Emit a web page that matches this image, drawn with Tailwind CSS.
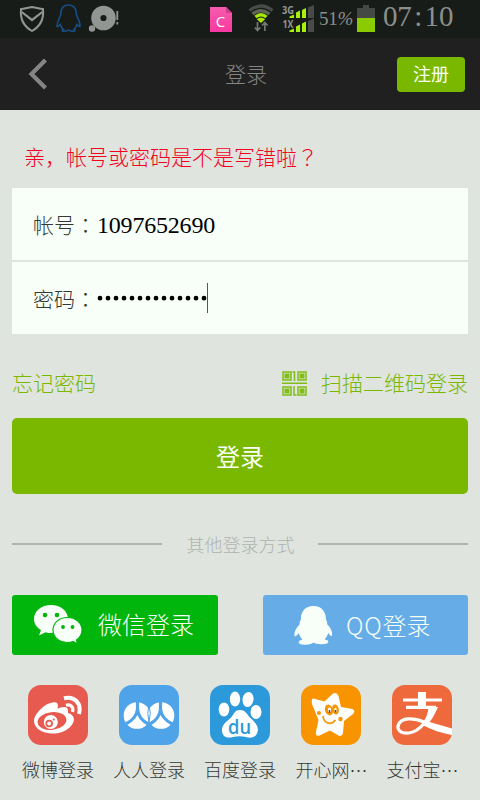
<!DOCTYPE html>
<html lang="zh-CN">
<head>
<meta charset="utf-8">
<meta name="viewport" content="width=device-width, initial-scale=1">
<title>登录</title>
<script src="https://cdn.jsdelivr.net/npm/@tailwindcss/browser@4"></script>
</head>
<body class="w-[480px] h-[800px] overflow-hidden flex flex-col bg-[#dfe4df] font-['Liberation_Serif','Noto_Sans_CJK_SC',sans-serif] font-light text-[21px] leading-none">

<!-- status bar -->
<div class="h-[38px] shrink-0 bg-[#181c18] flex items-start text-[#8c908c]">
  <svg class="shrink-0" width="208" height="38" viewBox="0 0 208 38" fill="none">
    <path d="M32 7C28 8 24 8.500 21 9C20 19 23 26 32 31C41 26 44 19 43 9C40 8.500 36 8 32 7Z" stroke="#929692" stroke-width="2"/>
    <path d="M22 11L32 18.500L42 11L42 13.500L32 21.500L22 13.500Z" fill="#929692"/>
    <path d="M68.500 5C63 5 60.500 9 60.700 15C59 19 57 22 57 26.500C58.500 27 59.500 25.500 60.300 24.500C61 27 62 28.500 63.300 29.500C61.500 30 61.500 31.400 64 31.400C66 31.400 67.500 31 68.500 30C69.500 31 71 31.400 73.500 31.400C75.500 31.400 75.500 30 74 29.500C75.500 28 76.500 26.500 77 24.500C78 25.500 79 27 80 26.500C80.500 22 78 19 76.500 15C76.500 9 74 5 68.500 5Z" stroke="#184e84" stroke-width="1.600"/>
    <circle cx="103.500" cy="18" r="7.700" stroke="#929692" stroke-width="9.200"/>
    <circle cx="92" cy="28.500" r="3.200" fill="#929692"/>
    <path d="M117.300 11V20M117.300 22V24.500" stroke="#929692" stroke-width="1.800"/>
  </svg>
  <svg class="shrink-0" width="108" height="38" viewBox="208 0 108 38" fill="none">
    <defs><linearGradient id="p" x1="0" y1="0" x2="0" y2="1"><stop offset="0" stop-color="#f45cae"/><stop offset="1" stop-color="#fa38a0"/></linearGradient></defs>
    <path d="M210 7H226L232 13V32H210Z" fill="url(#p)"/>
    <path d="M226 7L232 13H226Z" fill="#d23c8c"/>
    <text x="220.500" y="27" text-anchor="middle" font-family="Open Sans" font-weight="400" font-size="15" fill="#fff">C</text>
    <g stroke-width="3.200">
      <path d="M249.500 10.500Q261 1.500 272.500 10.500" stroke="#484b48"/>
      <path d="M252.500 14Q261 7.500 269.500 14" stroke="#5d6659"/>
      <path d="M255.500 17Q261 12.500 266.500 17" stroke="#a6e60a"/>
    </g>
    <path d="M256.800 19.200Q261 16 265.200 19.200L261 23Z" fill="#a6e60a"/>
    <path d="M257.500 22V31M254.800 27.500L257.500 30.500L260.200 27.500M264.800 31V22M262 25.500L264.800 22.500L267.600 25.500" stroke="#747874" stroke-width="1.700"/>
    <path d="M289.500 18V16.500L294 14.500V18ZM296 18V12.500L300 10.500V18ZM302 18V10L306 8V18ZM289.500 32V30.500L294 28.500V32ZM296 32V26.500L300 24.500V32ZM302 32V23.500L306 21.500V32Z" fill="#a6f00a"/>
    <path d="M308 18V7.500L314 5V18ZM308 32V21L314 18.500V32Z" fill="#484b48"/>
    <text x="282" y="14" font-family="Open Sans" font-weight="700" font-size="10.500" textLength="12" lengthAdjust="spacingAndGlyphs" fill="#929692" stroke="#181c18" stroke-width="1.500" paint-order="stroke">3G</text>
    <text x="282.500" y="27.500" font-family="Open Sans" font-weight="700" font-size="10.500" textLength="11" lengthAdjust="spacingAndGlyphs" fill="#929692" stroke="#181c18" stroke-width="1.500" paint-order="stroke">1X</text>
  </svg>
  <span class="w-[41px] shrink-0 pl-[3px] pt-[9px] text-[19px] tracking-[-0.300px] whitespace-nowrap">51<span class="inline-block w-[15px] origin-left italic">%</span></span>
  <svg class="shrink-0" width="18" height="38" viewBox="0 0 18 38"><path d="M0 8H6V5H12V8H18V18H0Z" fill="#454845"/><path d="M0 18H18V32H0Z" fill="#8acc00"/></svg>
  <span class="pl-[8px] pt-[2px] text-[29px] tracking-[-0.200px] whitespace-nowrap">07<span class="inline-block w-[13px] text-center">:</span>10</span>
</div>

<!-- title bar -->
<header class="h-[72px] shrink-0 bg-[#202020] grid grid-cols-[120px_1fr_120px] items-center pr-[15px] pl-[27px]">
  <svg width="22" height="34" viewBox="0 0 22 34" fill="none"><path d="M18.500 3L4.500 17L18.500 31" stroke="#858585" stroke-width="4.200"/></svg>
  <h1 class="text-[#858585] text-center pt-[3px]">登录</h1>
  <button class="justify-self-end w-[68px] h-[35px] rounded-[4px] bg-[#7ab800] text-[#f8fff8] text-[18px] font-normal pt-[1px]">注册</button>
</header>

<main class="px-3 flex flex-col">
  <p class="h-[78px] pt-[36px] pl-[12px] text-[#f4001c] whitespace-nowrap">亲，帐号或密码是不是写错啦<span class="font-['Noto_Sans_CJK_TC']" lang="zh-TW">？</span></p>

  <div class="flex flex-col gap-[2px]">
    <div class="h-[72px] bg-[#f8fff8] flex items-center pl-[21px] pt-[2px]">
      <span class="w-[64px] text-[#333833] whitespace-nowrap">帐号<span class="font-['Noto_Sans_CJK_TC']" lang="zh-TW">：</span></span>
      <span class="text-[24px] tracking-[-0.200px] text-black">1097652690</span>
    </div>
    <div class="h-[72px] bg-[#f8fff8] flex items-center pl-[21px]">
      <span class="w-[64px] text-[#333833] whitespace-nowrap pt-[2px]">密码<span class="font-['Noto_Sans_CJK_TC']" lang="zh-TW">：</span></span>
      <svg width="112" height="30" viewBox="0 0 112 30"><path d="M3 15.200H108" stroke="#000" stroke-width="4.800" stroke-linecap="round" stroke-dasharray="0 8"/><path d="M110.500 0V30" stroke="#555" stroke-width="1"/></svg>
    </div>
  </div>

  <div class="h-[84px] flex items-center justify-between text-[#7ab800] pt-[14px]">
    <span class="pt-[2px]">忘记密码</span>
    <span class="flex items-center gap-[14px]">
      <svg width="25" height="25" viewBox="0 0 25 25" fill="none" stroke="#7fbd16" stroke-width="1.500">
        <path d="M1 1H9V9H1ZM16 1H24V9H16ZM1 16H9V24H1ZM16 16H24V24H16Z"/>
        <path d="M2.500 2.500H7.500V7.500H2.500ZM17.500 2.500H22.500V7.500H17.500ZM2.500 17.500H7.500V22.500H2.500ZM17.500 17.500H22.500V22.500H17.500Z" fill="#7fbd16" stroke="none"/>
        <path d="M10.500 1H12.500V10M0 12.300H25M12 15V24H14.500"/>
      </svg>
      <span class="pt-[2px]">扫描二维码登录</span>
    </span>
  </div>

  <button class="h-[76px] rounded-[5px] bg-[#7ab800] text-[#f8fff8] text-[24px] font-normal pt-[3px]">登录</button>

  <div class="h-[101px] flex items-center justify-between">
    <span class="w-[150px] h-[2px] bg-[#b0b5b0] relative -top-px"></span>
    <span class="text-[18px] text-[#afb4af] pt-[2px] pl-[1px]">其他登录方式</span>
    <span class="w-[150px] h-[2px] bg-[#b0b5b0] relative -top-px"></span>
  </div>

  <div class="flex justify-between text-[24px] text-[#f8fff8]">
    <button class="w-[206px] h-[60px] rounded-[3px] bg-[#00b60c] flex items-center pl-[22px] gap-[16px]">
      <svg width="48" height="40" viewBox="0 0 48 40">
        <path d="M17 0C7.500 0 0 6 0 14C0 18.500 2.500 22.400 7 25L5 30.500L11.500 27.200C14 28 16.500 28.200 19 28C26 27.500 34 22 34 14C34 6 26.500 0 17 0Z" fill="#f8fff8"/>
        <path d="M33.500 12.500C25 12.500 19 18 19 25C19 32.500 25.500 37.500 33 37.500C35.200 37.500 37 37.200 39 36.500L43.500 39L42.500 35C46 32.500 48 29 48 25C48 18 41.500 12.500 33.500 12.500Z" fill="#f8fff8" stroke="#00b60c" stroke-width="1.200"/>
        <g fill="#00b60c"><circle cx="11" cy="10" r="2.300"/><circle cx="23" cy="10" r="2.300"/><circle cx="29" cy="22" r="1.900"/><circle cx="38.500" cy="22" r="1.900"/></g>
      </svg>
      <span class="pt-[2px]">微信登录</span>
    </button>
    <button class="w-[205px] h-[60px] rounded-[3px] bg-[#66ade8] flex items-center pl-[31px] gap-[14px]">
      <svg width="38" height="39" viewBox="0 0 38 39"><path d="M19.500 0C11 0 6.500 6 7 13.500C5.500 15 5.800 17 5.500 18.500C2 22 0 26 .5 30C2 31 3.500 28.500 4.700 27C5.500 30 7 32 8.500 33.500C4 34.200 3 38 8.500 38.500C13 39 17 38.500 19.500 36.500C22 38 26 38.500 30 38C36 37.500 35.500 34 30.500 33.500C32.300 31.500 33.500 29.500 34.300 27C35.500 28.500 37 31 38 29.800C38.500 26 37 22 33.300 18.500C33.300 16.500 33 15 32 13.500C32 6 28 0 19.500 0Z" fill="#f8fff8"/></svg>
      <span class="whitespace-nowrap font-['Noto_Sans_CJK_SC',sans-serif] pb-[1px]"><span class="tracking-[0.800px]">QQ</span>登录</span>
    </button>
  </div>

  <div class="pt-[30px] pl-[0.500px] grid grid-cols-[repeat(5,91px)] text-[18px] leading-[18px] text-[#353935]">
    <div class="flex flex-col items-center gap-[17px]">
      <svg width="60" height="60" viewBox="0 0 60 60" fill="none">
        <rect width="60" height="60" rx="13" fill="#e65a50"/>
        <path d="M25 17.500C30 16.500 30.500 20 29.500 24C35 21 41 21 40 28C46 30 47 34 45 38C41 46 31 49 23 48.500C14 48 6 43 6 36C6 29 17 18 25 17.500Z" fill="#fff"/>
        <ellipse cx="24" cy="36" rx="14.500" ry="8.800" transform="rotate(-7 24 36)" fill="#e65a50"/>
        <circle cx="22.800" cy="37" r="7" fill="#fff"/><circle cx="21.200" cy="38.500" r="2.900" stroke="#e65a50" stroke-width="1.700"/><circle cx="25.800" cy="34.500" r="1" fill="#e65a50"/>
        <path d="M36 13.300C46 10.500 54 18 51 29" stroke="#fff" stroke-width="4"/><path d="M38 20.300C43 19 46 22 44.500 27" stroke="#fff" stroke-width="3.200"/>
      </svg>
      <span>微博登录</span>
    </div>
    <div class="flex flex-col items-center gap-[17px]">
      <svg width="60" height="60" viewBox="0 0 60 60" fill="none">
        <rect width="60" height="60" rx="13" fill="#4fa3e8"/>
        <circle cx="18" cy="30.500" r="13.300" fill="#fff"/>
        <circle cx="42" cy="30.500" r="13.300" fill="#fff"/>
        <path d="M18.500 16V24C18 31 13 36 6 39.500M18.500 24C19 31 23 36 30 39.500M41.500 16V24C41 31 37 36 30 39.500M41.500 24C42 31 47 36 54 39.500" stroke="#4fa3e8" stroke-width="3.200"/>
        <path d="M30 20Q27.500 28 30 37Q32.500 28 30 20Z" stroke="#4fa3e8" stroke-width="1"/>
      </svg>
      <span>人人登录</span>
    </div>
    <div class="flex flex-col items-center gap-[17px]">
      <svg width="60" height="60" viewBox="0 0 60 60">
        <rect width="60" height="60" rx="13" fill="#2b99da"/>
        <g fill="#fff"><ellipse cx="14" cy="24.500" rx="5.300" ry="7"/><ellipse cx="25" cy="14" rx="5.200" ry="7.500"/><ellipse cx="38" cy="14.500" rx="5.500" ry="7.500" transform="rotate(10 38 14.500)"/><ellipse cx="46" cy="27" rx="5.500" ry="7"/>
        <path d="M30 25C36 25 37 30 41 33.500C46 38 49 42 47.500 47C46 53 40 53.500 36 52C32 51 27 51 23 52C17 53.500 12.500 52 12 46C11.500 40 16 37 20 33.500C24 30 24 25 30 25Z"/></g>
        <text x="29.500" y="49" text-anchor="middle" font-family="Open Sans" font-weight="600" font-size="20" textLength="23" lengthAdjust="spacingAndGlyphs" fill="#2b99da">du</text>
      </svg>
      <span>百度登录</span>
    </div>
    <div class="flex flex-col items-center gap-[17px]">
      <svg width="60" height="60" viewBox="0 0 60 60" fill="none">
        <rect width="60" height="60" rx="13" fill="#f89400"/>
        <path d="M12.500 13.500L23.500 16.500L32 8.500Q36 7 37.500 11L40 22L51.500 24Q55 26 52 29L43 36L42 48Q41 52 37.500 50.500L29 45.500L18.500 50.500Q14 51.500 15 47L17.500 35L11 19Q10 13.500 12.500 13.500Z" fill="#fff"/>
        <g fill="#f89400"><ellipse cx="28" cy="25" rx="4" ry="5.500" transform="rotate(-18 28 25)"/><ellipse cx="34.500" cy="24.500" rx="3.300" ry="5" transform="rotate(-12 34.500 24.500)"/><circle cx="18" cy="28" r="2"/><circle cx="39.500" cy="34" r="2.200"/></g>
        <ellipse cx="28.500" cy="25" rx="1.600" ry="2.800" fill="#fff"/><ellipse cx="34.500" cy="25" rx="1.200" ry="2.500" fill="#fff"/>
        <path d="M28.500 25V28M34.500 25V27.500" stroke="#7a4600" stroke-width="1.500"/>
        <path d="M22 31C22.500 38 30 41 34.500 35" stroke="#f89400" stroke-width="1.700"/>
      </svg>
      <span class="h-[18px] whitespace-nowrap pl-[1px]">开心网<span class="inline-block h-[18px] leading-[16px] align-top font-['Noto_Sans_CJK_SC']">⋯</span></span>
    </div>
    <div class="flex flex-col items-center gap-[17px]">
      <svg width="60" height="60" viewBox="0 0 60 60" fill="none">
        <rect width="60" height="60" rx="13" fill="#ee6a3c"/>
        <path d="M11 15H50M14 22.300H44" stroke="#fff" stroke-width="3.200"/>
        <path d="M26 7H34V22H26Z" fill="#fff"/>
        <path d="M40 22C37 33 29 46.500 17 48C8 49 4.500 44 6.500 39.500C9.500 32.500 21 32.500 32 37L56 46" stroke="#fff" stroke-width="3.200"/>
        <path d="M36.500 22H46C43 29 40.500 33.500 37.500 37L60 43.500V50C49 48 40 45 31.500 40.500C34 34 36 28 36.500 22Z" fill="#fff"/>
      </svg>
      <span class="h-[18px] whitespace-nowrap pl-[1px]">支付宝<span class="inline-block h-[18px] leading-[16px] align-top font-['Noto_Sans_CJK_SC']">⋯</span></span>
    </div>
  </div>
</main>
</body>
</html>
